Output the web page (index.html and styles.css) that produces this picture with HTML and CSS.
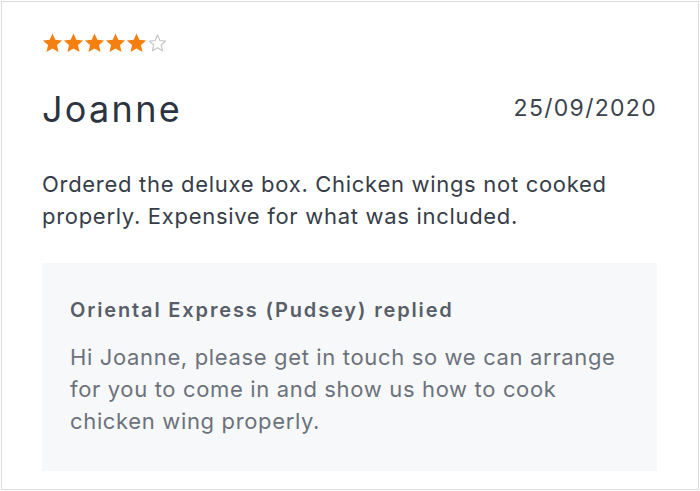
FILE: index.html
```html
<!DOCTYPE html>
<html lang="en">
<head>
<meta charset="utf-8">
<title>Review</title>
<link rel="stylesheet" href="styles.css">
</head>
<body>
<div class="card">
  <div class="stars" aria-label="Rating">
    <svg class="star" viewBox="0 0 24 24"><polygon class="full" points="12,0.6 15.2,7.8 23,8.6 17.1,13.8 18.9,21.6 12,17.6 5.1,21.6 6.9,13.8 1,8.6 8.8,7.8"/></svg>
    <svg class="star" viewBox="0 0 24 24"><polygon class="full" points="12,0.6 15.2,7.8 23,8.6 17.1,13.8 18.9,21.6 12,17.6 5.1,21.6 6.9,13.8 1,8.6 8.8,7.8"/></svg>
    <svg class="star" viewBox="0 0 24 24"><polygon class="full" points="12,0.6 15.2,7.8 23,8.6 17.1,13.8 18.9,21.6 12,17.6 5.1,21.6 6.9,13.8 1,8.6 8.8,7.8"/></svg>
    <svg class="star" viewBox="0 0 24 24"><polygon class="full" points="12,0.6 15.2,7.8 23,8.6 17.1,13.8 18.9,21.6 12,17.6 5.1,21.6 6.9,13.8 1,8.6 8.8,7.8"/></svg>
    <svg class="star" viewBox="0 0 24 24"><polygon class="full" points="12,0.6 15.2,7.8 23,8.6 17.1,13.8 18.9,21.6 12,17.6 5.1,21.6 6.9,13.8 1,8.6 8.8,7.8"/></svg>
    <svg class="star" viewBox="0 0 24 24"><polygon class="empty" points="12,2.4 14.7,8.6 21.3,9.3 16.3,13.7 17.8,20.3 12,16.9 6.2,20.3 7.7,13.7 2.7,9.3 9.3,8.6"/></svg>
  </div>
  <div class="header">
    <h2 class="name">Joanne</h2>
    <span class="date">25/09/2020</span>
  </div>
  <p class="comment">Ordered the deluxe box. Chicken wings not cooked properly. Expensive for what was included.</p>
  <div class="reply">
    <h3 class="reply-title">Oriental Express (Pudsey) replied</h3>
    <p class="reply-text">Hi Joanne, please get in touch so we can arrange for you to come in and show us how to cook chicken wing properly.</p>
  </div>
</div>
</body>
</html>
```

FILE: styles.css
```css
html, body {
  margin: 0;
  padding: 0;
  background: #ffffff;
}

body {
  font-family: "Inter", "Lato", "Liberation Sans", sans-serif;
  padding: 1px;
}

.card {
  box-sizing: border-box;
  width: 698px;
  height: 489px;
  border: 1px solid #dcdcdc;
  padding: 31px 41px 0 40px;
  background: #ffffff;
}

.stars {
  display: flex;
  height: 21px;
}

.star {
  width: 21px;
  height: 21px;
  display: block;
}

.star .full {
  fill: #f57f0f;
}

.star .empty {
  fill: none;
  stroke: #c4c4c4;
  stroke-width: 1.3;
  stroke-linejoin: round;
}

.header {
  display: flex;
  justify-content: space-between;
  align-items: flex-start;
  margin-top: 33px;
}

.name {
  margin: 0;
  font-size: 36px;
  font-weight: 400;
  line-height: 44px;
  color: #2b3440;
  letter-spacing: 2.3px;
}

.date {
  font-size: 23px;
  line-height: 28px;
  color: #3b424c;
  letter-spacing: 1.3px;
  margin-top: 7px;
}

.comment {
  margin: 37px 0 0;
  font-size: 22px;
  line-height: 32px;
  color: #363d47;
  letter-spacing: 0.7px;
}

.reply {
  margin-top: 31px;
  background: #f7f8fa;
  padding: 34px 28px 24px 28px;
  height: 208px;
  box-sizing: border-box;
}

.reply-title {
  margin: 0;
  font-size: 20px;
  line-height: 26px;
  font-weight: 600;
  color: #575e68;
  letter-spacing: 1.85px;
}

.reply-text {
  margin: 18px 0 0;
  font-size: 22px;
  line-height: 32px;
  color: #6c727b;
  letter-spacing: 0.65px;
}
```
